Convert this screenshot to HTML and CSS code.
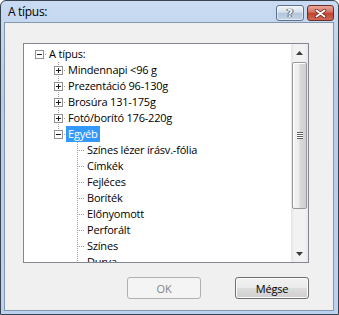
FILE: index.html
```html
<!DOCTYPE html>
<html lang="hu">
<head>
<meta charset="utf-8">
<title>A típus:</title>
<link rel="stylesheet" href="styles.css">
</head>
<body>
<div class="window">
  <div class="titlebar">
    <span class="title">A típus:</span>
    <div class="caption-btns">
      <span class="cbtn help">?</span>
      <span class="cbtn close"><svg width="13" height="9" viewBox="0 0 13 9"><path d="M2.5 1.5 L10.5 7.5 M10.5 1.5 L2.5 7.5" stroke="#5a1f18" stroke-width="3.4" stroke-linecap="round"/><path d="M2.5 1.5 L10.5 7.5 M10.5 1.5 L2.5 7.5" stroke="#fff" stroke-width="2" stroke-linecap="round"/></svg></span>
    </div>
  </div>
  <div class="client">
    <div class="treebox">
      <div class="tree">
        <div class="row"><span class="g hl"><i class="box minus"></i></span><span class="label">A típus:</span></div>
        <div class="row"><span class="g"></span><span class="g vl hl"><i class="box plus"></i></span><span class="label">Mindennapi &lt;96 g</span></div>
        <div class="row"><span class="g"></span><span class="g vl hl"><i class="box plus"></i></span><span class="label">Prezentáció 96-130g</span></div>
        <div class="row"><span class="g"></span><span class="g vl hl"><i class="box plus"></i></span><span class="label">Brosúra 131-175g</span></div>
        <div class="row"><span class="g"></span><span class="g vl hl"><i class="box plus"></i></span><span class="label">Fotó/borító 176-220g</span></div>
        <div class="row"><span class="g"></span><span class="g vl last hl"><i class="box minus"></i></span><span class="label sel">Egyéb</span></div>
        <div class="row"><span class="g"></span><span class="g"></span><span class="g vl hl"></span><span class="label">Színes lézer írásv.-fólia</span></div>
        <div class="row"><span class="g"></span><span class="g"></span><span class="g vl hl"></span><span class="label">Címkék</span></div>
        <div class="row"><span class="g"></span><span class="g"></span><span class="g vl hl"></span><span class="label">Fejléces</span></div>
        <div class="row"><span class="g"></span><span class="g"></span><span class="g vl hl"></span><span class="label">Boríték</span></div>
        <div class="row"><span class="g"></span><span class="g"></span><span class="g vl hl"></span><span class="label">Előnyomott</span></div>
        <div class="row"><span class="g"></span><span class="g"></span><span class="g vl hl"></span><span class="label">Perforált</span></div>
        <div class="row"><span class="g"></span><span class="g"></span><span class="g vl hl"></span><span class="label">Színes</span></div>
        <div class="row"><span class="g"></span><span class="g"></span><span class="g vl hl"></span><span class="label">Durva</span></div>
      </div>
      <div class="vscroll">
        <div class="sb-arrow"><svg width="7" height="4" viewBox="0 0 7 4"><path d="M0 4 L3.5 0 L7 4 Z" fill="#3c3c3c"/></svg></div>
        <div class="sb-track"><div class="sb-thumb"><span class="grip"></span></div></div>
        <div class="sb-arrow"><svg width="7" height="4" viewBox="0 0 7 4"><path d="M0 0 L7 0 L3.5 4 Z" fill="#3c3c3c"/></svg></div>
      </div>
    </div>
    <div class="buttons">
      <button class="btn" disabled>OK</button>
      <button class="btn">Mégse</button>
    </div>
  </div>
</div>
</body>
</html>
```
FILE: styles.css
```css
html, body {
  margin: 0;
  padding: 0;
  background: #ffffff;
}
body {
  font-family: "Open Sans", "Noto Sans", sans-serif;
  font-size: 11px;
  letter-spacing: -0.2px;
}
.window {
  width: 339px;
  height: 315px;
  box-sizing: border-box;
  border: 1px solid #3a4350;
  border-radius: 6px 6px 0 0;
  background: linear-gradient(#c9dbf2, #b6cde9 30%, #bcd3ef);
  padding: 0 4px 3px 3px;
  display: flex;
  flex-direction: column;
}
.titlebar {
  height: 21px;
  display: flex;
  align-items: flex-start;
  flex: none;
}
.title {
  padding: 2px 0 0 4px;
  font-size: 12px;
  letter-spacing: -0.3px;
  line-height: 17px;
  color: #000;
}
.caption-btns {
  margin-left: auto;
  margin-top: 4px;
  display: flex;
  gap: 3px;
  flex: none;
}
.cbtn {
  flex: none;
  height: 16px;
  width: 28px;
  box-sizing: border-box;
  border-radius: 3px;
  display: flex;
  align-items: center;
  justify-content: center;
}
.help {
  border: 1px solid #5d708c;
  background: linear-gradient(#eef3f9, #d6e1ee 45%, #b4c6dc 50%, #c4d4e8);
  box-shadow: inset 0 0 0 1px rgba(255, 255, 255, 0.5);
  font-family: "DejaVu Sans", sans-serif;
  font-weight: bold;
  font-size: 11px;
  letter-spacing: 0;
  color: #ffffff;
  text-shadow: 0 0 1px #4b5a70, 0 0 1px #4b5a70, 1px 0 0 #4b5a70, -1px 0 0 #4b5a70;
  line-height: 13px;
}
.close {
  width: 27px;
  border: 1px solid #6c2c25;
  background: linear-gradient(#e8a89c, #d5705f 45%, #c2412e 50%, #cf6b55);
}
.client {
  flex: 1;
  border: 1px solid #8597ae;
  background: #f0f0f0;
  display: flex;
  flex-direction: column;
  padding: 20px 24px 10px 18px;
}
.treebox {
  height: 220px;
  box-sizing: border-box;
  border: 1px solid #828790;
  background: #ffffff;
  display: flex;
  overflow: hidden;
}
.tree {
  flex: 1;
  padding: 2px 0 0 4px;
  overflow: hidden;
  color: #000;
}
.row {
  display: flex;
  height: 16px;
  align-items: center;
}
.g {
  position: relative;
  width: 19px;
  height: 16px;
  flex: none;
}
.g.vl::before {
  content: "";
  position: absolute;
  left: 11px;
  top: 0;
  bottom: 0;
  width: 1px;
  background: repeating-linear-gradient(to bottom, #a0a0a0 0 1px, transparent 1px 2px);
}
.g.last::before {
  bottom: 8px;
}
.g.hl::after {
  content: "";
  position: absolute;
  left: 12px;
  right: 0;
  top: 8px;
  height: 1px;
  background: repeating-linear-gradient(to right, transparent 0 1px, #a0a0a0 1px 2px);
}
.box {
  position: absolute;
  z-index: 1;
  left: 7px;
  top: 4px;
  width: 9px;
  height: 9px;
  box-sizing: border-box;
  border: 1px solid #919191;
  background-color: #ffffff;
  background-repeat: no-repeat;
}
.box.minus {
  background-image: linear-gradient(#1e1e1e, #1e1e1e);
  background-size: 5px 1px;
  background-position: 1px 3px;
}
.box.plus {
  background-image: linear-gradient(#1e1e1e, #1e1e1e), linear-gradient(#1e1e1e, #1e1e1e);
  background-size: 5px 1px, 1px 5px;
  background-position: 1px 3px, 3px 1px;
}
.label {
  padding: 0 2px;
  height: 16px;
  line-height: 16px;
  white-space: nowrap;
}
.label.sel {
  background: #3399ff;
  color: #ffffff;
}
.vscroll {
  width: 17px;
  flex: none;
  display: flex;
  flex-direction: column;
  background: linear-gradient(to right, #e4e4e4, #f2f2f2 20%, #f2f2f2 80%, #e8e8e8);
}
.sb-arrow {
  height: 17px;
  flex: none;
  display: flex;
  align-items: center;
  justify-content: center;
}
.sb-track {
  flex: 1;
  padding: 1px 1px 0 1px;
}
.sb-thumb {
  height: 147px;
  box-sizing: border-box;
  border: 1px solid #989898;
  border-radius: 2px;
  background: linear-gradient(to right, #f4f4f4, #ececec 45%, #d9d9d9 55%, #cfcfcf);
  box-shadow: inset 1px 1px 0 #ffffff;
  display: flex;
  align-items: center;
  justify-content: center;
}
.grip {
  width: 6px;
  height: 7px;
  background: repeating-linear-gradient(to bottom, #5d5d5d 0 1px, #ffffff 1px 2px);
}
.buttons {
  margin-top: 14px;
  display: flex;
  justify-content: flex-end;
  gap: 34px;
}
.btn {
  width: 74px;
  height: 22px;
  box-sizing: border-box;
  border: 1px solid #707070;
  border-radius: 3px;
  background: linear-gradient(#f2f2f2, #ebebeb 50%, #dddddd 50%, #cfcfcf);
  box-shadow: inset 0 0 0 1px #fbfbfb;
  font-family: "Open Sans", "Noto Sans", sans-serif;
  font-size: 11px;
  letter-spacing: -0.2px;
  color: #000;
  padding: 0;
}
.btn:disabled {
  border-color: #adb2b5;
  background: #f4f4f4;
  box-shadow: none;
  color: #838383;
}
```
